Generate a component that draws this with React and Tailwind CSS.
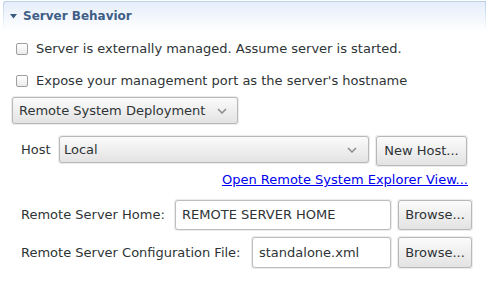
import React from 'react';

function Chevron() {
  return (
    <svg width="10" height="6" viewBox="0 0 10 6" className="shrink-0">
      <path d="M1 1 L5 5 L9 1" fill="none" stroke="#8a8d8a" strokeWidth="1.5" />
    </svg>
  );
}

function Checkbox() {
  return (
    <span className="w-[12px] h-[12px] rounded-[2px] border border-[#9ea09e] bg-gradient-to-b from-white to-[#ebebeb] shrink-0" />
  );
}

function Button({ children, className }) {
  return (
    <div className={`rounded-[3px] p-px bg-[#ececec] ${className}`}>
      <div className="h-full rounded-[3px] border border-[#b8b8b8] bg-gradient-to-b from-[#fbfbfb] to-[#e3e3e3] flex items-center justify-center">
        {children}
      </div>
    </div>
  );
}

function Field({ value, className }) {
  return (
    <div className={`rounded-[3px] p-px bg-[#ececec] ${className}`}>
      <div className="h-full rounded-[3px] border border-[#bdbdbd] bg-white flex items-center px-[6px]">
        {value}
      </div>
    </div>
  );
}

export default function App() {
  return (
    <div className="w-[489px] h-[281px] bg-white text-[13px] text-[#2e3436] font-['DejaVu_Sans',sans-serif] overflow-hidden">
      {/* section header */}
      <div className="mx-[3px] mt-px rounded-tl-[3px] pt-px px-px bg-gradient-to-b from-[#b9cfe9] to-white">
        <div className="h-[29px] rounded-tl-[3px] bg-gradient-to-b from-[#e6eefa] to-white flex items-center">
          <svg width="7" height="5" viewBox="0 0 7 5" className="ml-[6px]">
            <path d="M0 0 L7 0 L3.5 4.5 Z" fill="#3b5a82" />
          </svg>
          <span className="ml-[6px] font-bold text-[12px] text-[#3f5e86] -mt-[2px]">Server Behavior</span>
        </div>
      </div>

      <div className="flex items-center h-[18px] mt-[9px] ml-[16px] gap-[8px]">
        <Checkbox />
        <span>Server is externally managed. Assume server is started.</span>
      </div>
      <div className="flex items-center h-[18px] mt-[14px] ml-[16px] gap-[8px]">
        <Checkbox />
        <span>Expose your management port as the server's hostname</span>
      </div>

      <Button className="ml-[11px] mt-[6px] w-[228px] h-[29px]">
        <div className="flex items-center justify-between w-full pl-[6px] pr-[10px]">
          <span>Remote System Deployment</span>
          <Chevron />
        </div>
      </Button>

      <div className="flex items-start mt-[10px] ml-[21px] h-[31px]">
        <span className="w-[37px] h-[29px] flex items-center">Host</span>
        <Button className="w-[312px] h-[29px]">
          <div className="flex items-center justify-between w-full pl-[4px] pr-[11px]">
            <span>Local</span>
            <Chevron />
          </div>
        </Button>
        <Button className="ml-[5px] w-[93px] h-[32px]">New Host...</Button>
      </div>

      <div className="flex justify-end pr-[21px] mt-[6px] h-[16px] items-center">
        <span className="text-[#0000ee] underline">Open Remote System Explorer View...</span>
      </div>

      <div className="flex items-center mt-[11px] ml-[21px] h-[32px]">
        <span className="w-[153px]">Remote Server Home:</span>
        <Field value="REMOTE SERVER HOME" className="w-[218px] h-[32px]" />
        <Button className="ml-[5px] w-[76px] h-[32px]">Browse...</Button>
      </div>

      <div className="flex items-center mt-[5px] ml-[21px] h-[33px]">
        <span className="w-[230px]">Remote Server Configuration File:</span>
        <Field value="standalone.xml" className="w-[141px] h-[33px]" />
        <Button className="ml-[5px] w-[76px] h-[33px]">Browse...</Button>
      </div>
    </div>
  );
}
